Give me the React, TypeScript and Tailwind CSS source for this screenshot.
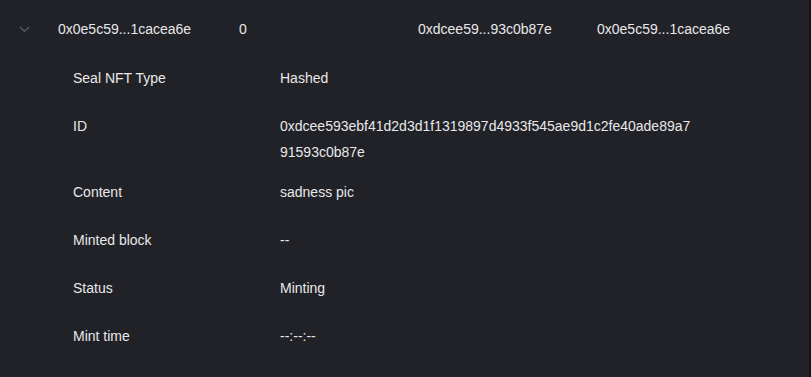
import React from 'react';

const rows: { label: string; value: string; tall?: boolean }[] = [
  { label: 'Seal NFT Type', value: 'Hashed' },
  { label: 'ID', value: '0xdcee593ebf41d2d3d1f1319897d4933f545ae9d1c2fe40ade89a791593c0b87e', tall: true },
  { label: 'Content', value: 'sadness pic' },
  { label: 'Minted block', value: '--' },
  { label: 'Status', value: 'Minting' },
  { label: 'Mint time', value: '--:--:--' },
];

const App: React.FC = () => {
  return (
    <div className="h-screen w-full bg-[#212227] border-r-2 border-[#16171a] text-[14px] text-[#e8e8ea] font-['Liberation_Sans',Arial,sans-serif] overflow-hidden">
      {/* Summary row */}
      <div className="grid grid-cols-[58px_181px_179px_179px_1fr] h-[54px] pt-1 items-center">
        <div className="pl-[19px] flex items-center">
          <svg width="11" height="7" viewBox="0 0 11 7" fill="none">
            <polyline points="1,1 5.5,5.5 10,1" stroke="#5c5e66" strokeWidth="1.2" />
          </svg>
        </div>
        <div>0x0e5c59...1cacea6e</div>
        <div>0</div>
        <div>0xdcee59...93c0b87e</div>
        <div>0x0e5c59...1cacea6e</div>
      </div>

      {/* Details */}
      <div className="pl-[73px]">
        {rows.map((r) => (
          <div
            key={r.label}
            className={`grid grid-cols-[207px_1fr] leading-[26px] ${r.tall ? 'pt-[11px] pb-[3px]' : 'py-[11px]'}`}
          >
            <div>{r.label}</div>
            <div className="w-[414px] break-all">{r.value}</div>
          </div>
        ))}
      </div>
    </div>
  );
};

export default App;
